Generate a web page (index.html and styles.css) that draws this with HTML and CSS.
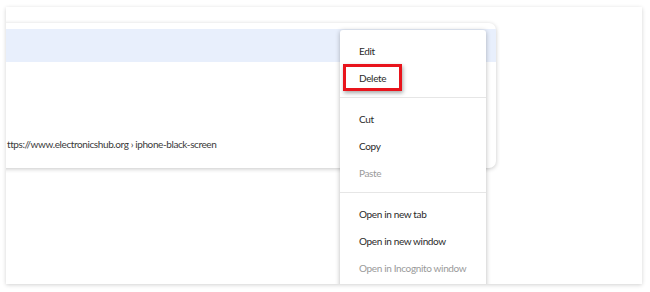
FILE: index.html
```html
<!DOCTYPE html>
<html lang="en">
<head>
  <meta charset="UTF-8" />
  <title>Bookmark context menu</title>
  <link rel="stylesheet" href="styles.css">
</head>
<body>
  <div class="frame">
    <div class="result-card">
      <div class="result-highlight"></div>
      <div class="result-url">ttps://www.electronicshub.org › iphone-black-screen</div>
    </div>

    <!-- Context menu over the card -->
    <div class="context-menu">
      <div class="menu-group">
        <div class="menu-item">Edit</div>
        <div class="menu-item">Delete</div>
      </div>
      <div class="menu-group">
        <div class="menu-item">Cut</div>
        <div class="menu-item">Copy</div>
        <div class="menu-item disabled">Paste</div>
      </div>
      <div class="menu-group">
        <div class="menu-item">Open in new tab</div>
        <div class="menu-item">Open in new window</div>
        <div class="menu-item disabled">Open in Incognito window</div>
      </div>
    </div>

    <div class="mark-box"></div>
  </div>
</body>
</html>
```

FILE: styles.css
```css
* {
  box-sizing: border-box;
}

body, html {
  margin: 0;
  padding: 0;
  background: #fff;
  font-family: 'Lato', 'Noto Sans', Arial, sans-serif;
  color: #202124;
}

body {
  padding: 7px 8px 8px 6px;
}

/* Outer screenshot frame */
.frame {
  position: relative;
  width: 636px;
  height: 277px;
  background: #fff;
  overflow: hidden;
  box-shadow: 0 1px 4px rgba(0, 0, 0, 0.18);
  padding-top: 16px;
}

/* Search result card, cut off on the left */
.result-card {
  margin-left: -20px;
  width: 510px;
  height: 145px;
  background: #fff;
  border-radius: 0 7px 7px 0;
  box-shadow: 0 1px 4px rgba(0, 0, 0, 0.22);
  padding-top: 6px;
}

.result-highlight {
  height: 33px;
  background: #e8effc;
}

.result-url {
  margin-top: 75px;
  padding-left: 21px;
  font-size: 10px;
  letter-spacing: -0.4px;
  color: #3a3a3a;
  line-height: 14px;
}

/* Context menu */
.context-menu {
  position: absolute;
  left: 334px;
  top: 23px;
  width: 146px;
  height: 270px;
  background: #fff;
  border-radius: 3px;
  box-shadow: 0 1px 5px rgba(0, 0, 0, 0.28);
  padding-top: 8px;
}

.menu-group {
  padding-bottom: 5px;
  border-bottom: 1px solid #e6e6e6;
  margin-bottom: 8px;
}

.menu-group:last-child {
  border-bottom: none;
}

.menu-item {
  height: 27px;
  line-height: 27px;
  padding-left: 19px;
  font-size: 10px;
  letter-spacing: -0.35px;
  color: #2a2a2a;
  white-space: nowrap;
}

.menu-item.disabled {
  color: #9a9a9a;
}

/* Red highlight around "Delete" */
.mark-box {
  position: absolute;
  left: 337px;
  top: 57px;
  width: 59px;
  height: 27px;
  border: 3px solid #e8141c;
  box-shadow: 1px 2px 4px rgba(0, 0, 0, 0.35);
}
```
